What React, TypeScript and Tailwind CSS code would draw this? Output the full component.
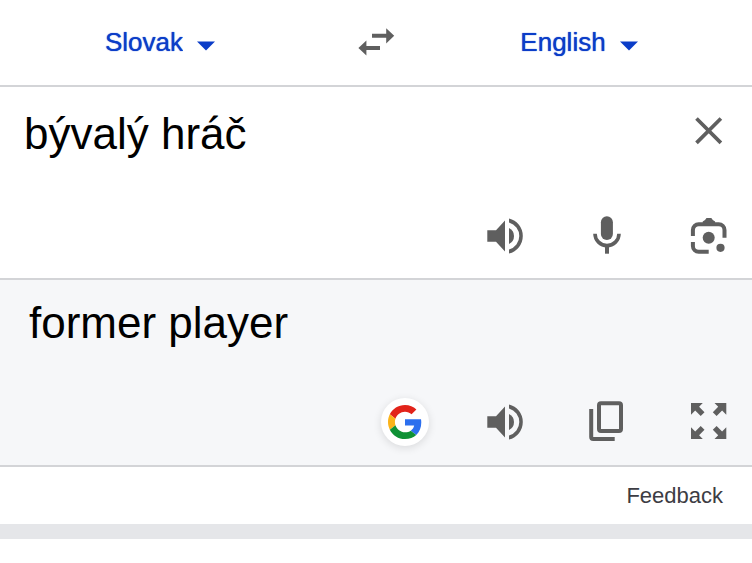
import { useState, type ReactNode } from "react";

interface LanguageSelectProps {
  label: string;
  value: string;
  onChange: (value: string) => void;
}

const languages = ["Slovak", "English"];

function LanguageSelect({ label, value, onChange }: LanguageSelectProps) {
  return (
    <label className="flex items-center gap-3.5 text-[#0b3dc8]">
      <select
        aria-label={label}
        value={value}
        onChange={(e) => onChange(e.target.value)}
        className="appearance-none field-sizing-content bg-transparent text-[26px] leading-8 [text-shadow:0_0_1px]"
      >
        {languages.map((language) => (
          <option key={language}>{language}</option>
        ))}
      </select>
      <svg viewBox="0 0 18 24" className="w-[18px] h-6 fill-current" aria-hidden="true">
        <path d="M0 11.5h18l-9 9z" />
      </svg>
    </label>
  );
}

function IconButton({ label, children }: { label: string; children: ReactNode }) {
  return (
    <button type="button" aria-label={label} className="size-12 shrink-0">
      <svg viewBox="0 0 48 48" className="size-12 fill-current" aria-hidden="true">
        {children}
      </svg>
    </button>
  );
}

function SpeakerButton({ label }: { label: string }) {
  return (
    <IconButton label={label}>
      <path d="M5.3 18.2H14L23 8.5v31L14 29.8H5.3z" />
      <path d="M27 16a8.9 8.9 0 0 1 0 16z" />
      <path d="M27 6.5a18 18 0 0 1 0 35v-4a14 14 0 0 0 0-27z" />
    </IconButton>
  );
}

function GoogleLogo() {
  return (
    <svg viewBox="0 0 48 48" className="size-[34px]" aria-hidden="true">
      <path fill="#e2231a" d="M24 9.5c3.54 0 6.71 1.22 9.21 3.6l6.85-6.85C35.9 2.38 30.47 0 24 0 14.62 0 6.51 5.38 2.56 13.22l7.98 6.19C12.43 13.72 17.74 9.5 24 9.5z" />
      <path fill="#2c6fee" d="M46.98 24.55c0-1.57-.15-3.09-.38-4.55H24v9.02h12.94c-.58 2.96-2.26 5.48-4.78 7.18l7.73 6c4.51-4.18 7.09-10.36 7.09-17.65z" />
      <path fill="#fbb31a" d="M10.53 28.59c-.48-1.45-.76-2.99-.76-4.59s.27-3.14.76-4.59l-7.98-6.19C.92 16.46 0 20.12 0 24c0 3.88.92 7.54 2.56 10.78l7.97-6.19z" />
      <path fill="#0f9135" d="M24 48c6.48 0 11.93-2.13 15.89-5.81l-7.73-6c-2.15 1.45-4.92 2.3-8.16 2.3-6.26 0-11.57-4.22-13.47-9.91l-7.98 6.19C6.51 42.62 14.62 48 24 48z" />
    </svg>
  );
}

const expandArrow = "M7 5h11.8l-3.7 3.7 5.4 5.5-3.8 3.8-5.5-5.4L7 16.8z";

export default function App() {
  const [source, setSource] = useState("Slovak");
  const [target, setTarget] = useState("English");
  const [text, setText] = useState("bývalý hráč");

  const swapLanguages = () => {
    setSource(target);
    setTarget(source);
  };

  return (
    <main className="min-h-screen bg-white text-black font-['Liberation_Sans',Arial,sans-serif]">
      {/* Language bar */}
      <header className="grid grid-cols-[1fr_auto_1fr] items-center pt-[18px] pb-[19px] border-b-2 border-[#d3d4d7]">
        <div className="flex justify-center pr-8">
          <LanguageSelect label="Source language" value={source} onChange={setSource} />
        </div>
        <button type="button" aria-label="Swap languages" onClick={swapLanguages} className="text-[#5f5f5f]">
          <svg viewBox="0 0 48 48" className="size-12 fill-current" aria-hidden="true">
            <path d="M20 15.8h14.2v-5.6l8 7.6-8 7.6v-5.600H20z" />
            <path d="M28 28H14.4v-5.500l-8 7.500 8 7.500v-5.600H28z" />
          </svg>
        </button>
        <div className="flex justify-center pl-1.5">
          <LanguageSelect label="Target language" value={target} onChange={setTarget} />
        </div>
      </header>

      {/* Source text */}
      <section className="pt-[21px] pb-[18px] pr-5 border-b-2 border-[#d3d4d7] text-[#5f5f5f]">
        <div className="flex items-start">
          <textarea
            aria-label="Source text"
            rows={2}
            spellCheck={false}
            value={text}
            onChange={(e) => setText(e.target.value)}
            className="block flex-1 min-w-0 pl-6 resize-none outline-none text-[44px] leading-[52px] text-black"
          />
          <button type="button" aria-label="Clear text" onClick={() => setText("")}>
            <svg viewBox="0 0 48 46" className="w-12 h-[46px]" fill="none" stroke="currentColor" strokeWidth="3.7" aria-hidden="true">
              <path d="M12.500 10.500l24.400 24.400M36.900 10.500l-24.400 24.400" />
            </svg>
          </button>
        </div>
        <div className="flex justify-end gap-[53px]">
          <SpeakerButton label="Listen to source text" />
          <IconButton label="Translate by voice">
            <rect x="17.9" y="4.3" width="12" height="23.6" rx="6" />
            <path d="M12 21.700a12 11.900 0 0 0 24 0" fill="none" stroke="currentColor" strokeWidth="3.6" />
            <path d="M22 33h4v8.700h-4z" />
          </IconButton>
          <IconButton label="Translate with camera">
            <path d="M18.700 11v-1.500l2.300-1.500 1.500-2h4.800l1.500 2 2.300 1.500V11z" />
            <path
              d="M8.900 24v-6a5.800 5.800 0 0 1 5.800-5.800h20a5.800 5.800 0 0 1 5.800 5.800v7.700M8.900 30v4a5.800 5.800 0 0 0 5.800 5.800h10"
              fill="none"
              stroke="currentColor"
              strokeWidth="4"
            />
            <circle cx="24.7" cy="25.7" r="6" />
            <circle cx="36.5" cy="35.8" r="4.1" />
          </IconButton>
        </div>
      </section>

      {/* Translation */}
      <section className="pt-[17px] pb-[19px] pr-5 bg-[#f6f7f9] border-b-2 border-[#d3d4d7] text-[#5f5f5f]">
        <p className="pl-[29px] text-[44px] leading-[52px] text-black">former player</p>
        <div className="flex justify-end gap-[53px] mt-[49px]">
          <button
            type="button"
            aria-label="Search with Google"
            className="flex items-center justify-center size-12 rounded-full bg-white shadow-[0_2px_8px_rgba(0,0,0,0.12)]"
          >
            <GoogleLogo />
          </button>
          <SpeakerButton label="Listen to translation" />
          <IconButton label="Copy translation">
            <path
              d="M18 5.300h18a2 2 0 0 1 2 2V31a2 2 0 0 1-2 2H18a2 2 0 0 1-2-2V7.300a2 2 0 0 1 2-2zM8.200 11v28a2 2 0 0 0 2 2h21.500"
              fill="none"
              stroke="currentColor"
              strokeWidth="4"
            />
          </IconButton>
          <IconButton label="Full screen">
            <path d={expandArrow} />
            <path d={expandArrow} transform="matrix(-1 0 0 1 49.3 0)" />
            <path d={expandArrow} transform="matrix(1 0 0 -1 0 46)" />
            <path d={expandArrow} transform="matrix(-1 0 0 -1 49.3 46)" />
          </IconButton>
        </div>
      </section>

      {/* Feedback */}
      <footer className="flex justify-end pt-[15px] pb-[14px] pr-[29px]">
        <a href="#feedback" className="text-[22px] leading-7 text-[#3c3c43]">
          Feedback
        </a>
      </footer>
      <div className="h-[15px] bg-[#e5e6e9]" />
    </main>
  );
}
